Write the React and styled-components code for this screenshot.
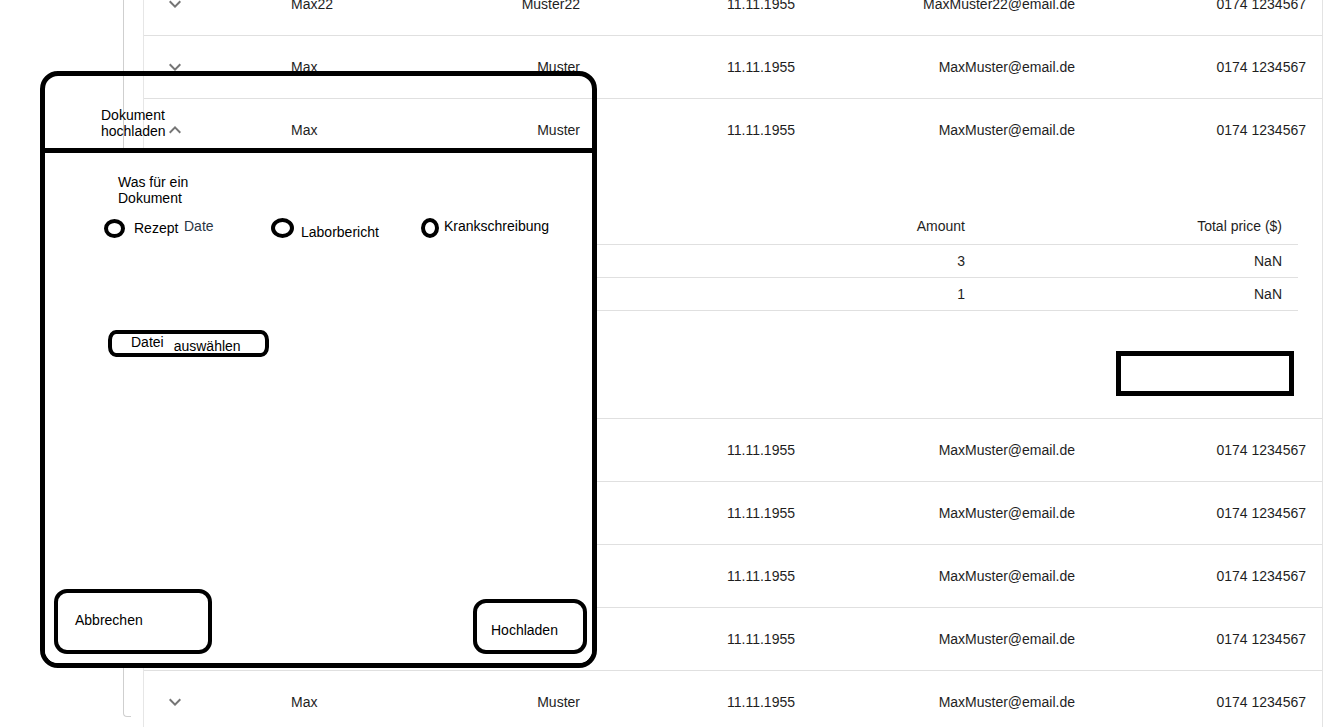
import React from 'react';
import styled, { createGlobalStyle } from 'styled-components';

const Global = createGlobalStyle`
  html, body {
    margin: 0;
    padding: 0;
    overflow: hidden;
    background: #fff;
    font-family: "Liberation Sans", Arial, sans-serif;
  }
`;

const rows = [
  { first: 'Max22', last: 'Muster22', mail: 'MaxMuster22@email.de' },
  { first: 'Max', last: 'Muster', mail: 'MaxMuster@email.de' },
  { first: 'Max', last: 'Muster', mail: 'MaxMuster@email.de', open: true },
  { first: 'Max', last: 'Muster', mail: 'MaxMuster@email.de' },
  { first: 'Max', last: 'Muster', mail: 'MaxMuster@email.de' },
  { first: 'Max', last: 'Muster', mail: 'MaxMuster@email.de' },
  { first: 'Max', last: 'Muster', mail: 'MaxMuster@email.de' },
  { first: 'Max', last: 'Muster', mail: 'MaxMuster@email.de' },
];

const history = [
  { amount: 3, total: 'NaN' },
  { amount: 1, total: 'NaN' },
];

const Chevron = ({ up }) => (
  <svg width="24" height="24" viewBox="0 0 24 24" fill="#757575">
    {up
      ? <path d="M7.41 15.41 12 10.83l4.59 4.58L18 14l-6-6-6 6z" />
      : <path d="M7.41 8.59 12 13.17l4.59-4.58L18 10l-6 6-6-6 1.41-1.41z" />}
  </svg>
);

const App = () => {
  return (
    <>
      <Global />
      <Page>
        <Rail />
        <TableBox>
          {rows.map((r, i) => (
            <React.Fragment key={i}>
              <Row $open={r.open}>
                <IconCell><Chevron up={r.open} /></IconCell>
                <Cell>{r.first}</Cell>
                <Cell $align="right">{r.last}</Cell>
                <Cell $align="right">11.11.1955</Cell>
                <Cell $align="right">{r.mail}</Cell>
                <Cell $align="right">0174 1234567</Cell>
              </Row>
              {r.open && (
                <Collapse>
                  <HistRow $head>
                    <HistCell><Peek>Date</Peek></HistCell>
                    <HistCell>Customer</HistCell>
                    <HistCell $align="right">Amount</HistCell>
                    <HistCell $align="right">Total price ($)</HistCell>
                  </HistRow>
                  {history.map((h, j) => (
                    <HistRow key={j}>
                      <HistCell />
                      <HistCell />
                      <HistCell $align="right">{h.amount}</HistCell>
                      <HistCell $align="right">{h.total}</HistCell>
                    </HistRow>
                  ))}
                  <Placeholder />
                </Collapse>
              )}
            </React.Fragment>
          ))}
        </TableBox>
      </Page>

      <Dialog>
        <DialogHead>Dokument<br />hochladen</DialogHead>
        <DialogBody>
          <Question>Was für ein Dokument</Question>
          <Choices>
            <Choice $gap={9}>
              <Ring $w={21} $h={19} />
              <span>Rezept</span>
            </Choice>
            <Choice $gap={7}>
              <Ring $w={23} $h={20} />
              <ChoiceLabel $shift={4}>Laborbericht</ChoiceLabel>
            </Choice>
            <Choice $gap={5}>
              <Ring $w={18} $h={20} />
              <ChoiceLabel $shift={-2}>Krankschreibung</ChoiceLabel>
            </Choice>
          </Choices>
          <FilePick>
            <span>Datei</span>
            <FileWord>auswählen</FileWord>
          </FilePick>
          <Footer>
            <SketchButton $w={158} $h={65} $pad={17} $lift={3}>Abbrechen</SketchButton>
            <SketchButton $w={114} $h={55} $pad={14} $down={6}>Hochladen</SketchButton>
          </Footer>
        </DialogBody>
      </Dialog>
    </>
  );
};

const Page = styled.div`
  display: flex;
  align-items: flex-start;
  padding-left: 123px;
  margin-top: -27px;
  color: #1e1e1e;
  font-size: 14px;
`;

const Rail = styled.div`
  width: 8px;
  height: 744px;
  box-sizing: border-box;
  border-left: 1px solid #cfcfcf;
  border-bottom: 1px solid #cfcfcf;
  border-bottom-left-radius: 4px;
  flex-shrink: 0;
`;

const TableBox = styled.div`
  margin-left: 12px;
  width: 1178px;
  border-left: 1px solid #e6e6e6;
  border-right: 1px solid #e3e3e3;
`;

const Row = styled.div`
  display: grid;
  grid-template-columns: 131px 161px 160px 215px 280px 231px;
  height: 63px;
  box-sizing: border-box;
  border-bottom: 1px solid ${p => (p.$open ? 'transparent' : '#e0e0e0')};
`;

const Cell = styled.div`
  display: flex;
  align-items: center;
  justify-content: ${p => (p.$align === 'right' ? 'flex-end' : 'flex-start')};
  padding: 0 16px;
  white-space: nowrap;
`;

const IconCell = styled.div`
  display: flex;
  align-items: center;
  padding-left: 19px;
`;

const Collapse = styled.div`
  display: flex;
  flex-direction: column;
  height: 257px;
  box-sizing: border-box;
  padding: 50px 24px 0;
  border-bottom: 1px solid #e0e0e0;
`;

const HistRow = styled.div`
  display: grid;
  grid-template-columns: 200px 200px 1fr 317px;
  height: 33px;
  box-sizing: border-box;
  padding-bottom: ${p => (p.$head ? 4 : 0)}px;
  border-bottom: 1px solid #e0e0e0;
`;

const HistCell = styled.div`
  display: flex;
  align-items: center;
  justify-content: ${p => (p.$align === 'right' ? 'flex-end' : 'flex-start')};
  padding: 0 16px;
  white-space: nowrap;
`;

const Peek = styled.span`
  position: relative;
  z-index: 3;
  color: #2a3544;
`;

const Placeholder = styled.div`
  align-self: flex-end;
  margin: 40px 4px 0 0;
  width: 178px;
  height: 45px;
  box-sizing: border-box;
  border: 5px solid #000;
`;

const Dialog = styled.div`
  position: absolute;
  left: 40px;
  top: 71px;
  z-index: 1;
  width: 557px;
  height: 597px;
  box-sizing: border-box;
  border: 5px solid #000;
  border-radius: 18px;
  display: flex;
  flex-direction: column;
  color: #000;
  font-size: 14px;
  line-height: 16px;
`;

const DialogHead = styled.div`
  height: 77px;
  box-sizing: border-box;
  padding: 31px 0 0 56px;
  border-bottom: 5px solid #000;
  margin-right: -5px;
`;

const DialogBody = styled.div`
  flex: 1;
  display: flex;
  flex-direction: column;
  background: #fff;
  border-radius: 0 0 13px 13px;
`;

const Question = styled.div`
  margin: 21px 0 0 73px;
  width: 75px;
`;

const Choices = styled.div`
  display: grid;
  grid-template-columns: 167px 150px auto;
  margin: 12px 0 0 59px;
`;

const Choice = styled.div`
  display: flex;
  align-items: center;
  gap: ${p => p.$gap}px;
  height: 20px;
`;

const ChoiceLabel = styled.span`
  position: relative;
  top: ${p => p.$shift}px;
`;

const Ring = styled.span`
  width: ${p => p.$w}px;
  height: ${p => p.$h}px;
  box-sizing: border-box;
  border: 4px solid #000;
  border-radius: 50%;
  flex-shrink: 0;
`;

const FilePick = styled.div`
  display: flex;
  align-items: flex-start;
  gap: 10px;
  margin: 92px 0 0 63px;
  width: 161px;
  height: 27px;
  box-sizing: border-box;
  padding: 0 0 0 19px;
  border: 4px solid #000;
  border-radius: 8px / 10px;
`;

const FileWord = styled.span`
  margin-top: 4px;
`;

const Footer = styled.div`
  margin-top: auto;
  display: flex;
  align-items: flex-end;
  justify-content: space-between;
  padding: 0 5px 9px 9px;
`;

const SketchButton = styled.div`
  width: ${p => p.$w}px;
  height: ${p => p.$h}px;
  box-sizing: border-box;
  border: 4px solid #000;
  border-radius: 13px;
  display: flex;
  align-items: center;
  padding: ${p => p.$down || 0}px 0 ${p => p.$lift || 0}px ${p => p.$pad}px;
`;

export default App;
